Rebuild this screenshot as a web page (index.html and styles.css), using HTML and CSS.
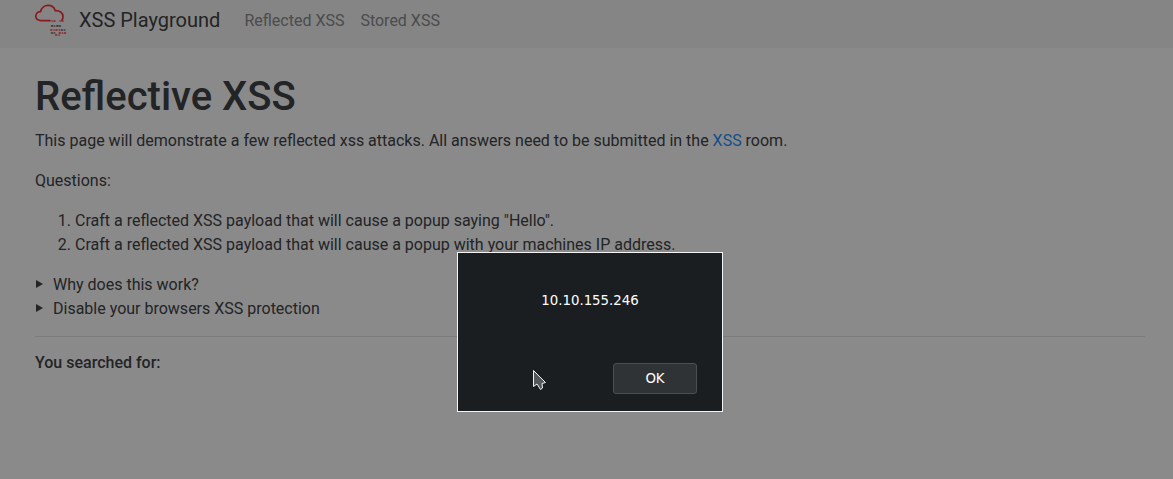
FILE: index.html
```html
<!DOCTYPE html>
<html lang="en">
<head>
<meta charset="utf-8">
<title>XSS Playground</title>
<link rel="stylesheet" href="styles.css">
</head>
<body>
<nav class="navbar">
  <a class="brand" href="#">
    <svg class="logo" width="32" height="36" viewBox="0 0 32 36" aria-hidden="true">
      <path d="M15 18.7H6C3 18.7 .8 16.8 .8 14.2C.8 11.5 3 9.7 5.5 9.7C6.3 6 9.5 3.4 13.2 3.4C16.7 3.4 19.3 5.5 20.2 8.6C24.5 8.2 28 10.8 28 14.6C28 16 27.6 17.2 27 18" fill="none" stroke="#ff3038" stroke-width="1.7" stroke-linecap="round"/>
      <text class="logo-bits logo-red" x="15.7" y="19.5">10</text>
      <text class="logo-bits logo-red" x="23.7" y="19.5">10</text>
      <text class="logo-bits" x="15.7" y="24.5">5150</text>
      <text class="logo-bits logo-red" x="15" y="28.5">0101</text>
      <text class="logo-bits" x="25.5" y="28.5">01</text>
      <text class="logo-bits" x="15.7" y="31.5">01</text>
      <text class="logo-bits logo-red" x="23.5" y="31.5">010</text>
      <text class="logo-bits logo-red" x="20" y="34">01</text>
    </svg>
    <span class="brand-name">XSS Playground</span>
  </a>
  <a class="nav-link" href="#">Reflected XSS</a>
  <a class="nav-link" href="#">Stored XSS</a>
</nav>
<main class="content">
  <h1>Reflective XSS</h1>
  <p>This page will demonstrate a few reflected xss attacks. All answers need to be submitted in the <a class="link" href="#">XSS</a> room.</p>
  <p>Questions:</p>
  <ol>
    <li>Craft a reflected XSS payload that will cause a popup saying "Hello".</li>
    <li>Craft a reflected XSS payload that will cause a popup with your machines IP address.</li>
  </ol>
  <details><summary>Why does this work?</summary></details>
  <details><summary>Disable your browsers XSS protection</summary></details>
  <hr>
  <p class="searched">You searched for:</p>
</main>
<div class="overlay"></div>
<div class="dialog" role="alertdialog">
  <div class="message">10.10.155.246</div>
  <button class="ok" type="button">OK</button>
  <svg class="cursor" width="15" height="23" viewBox="0 0 15 23" aria-hidden="true">
    <path d="M1.5 1.5V17.5L5 15L8.5 20.5L10.5 19L10 14.5L13.5 13.5Z" fill="#55585a" stroke="#f2f2f2" stroke-width="1"/>
  </svg>
</div>
</body>
</html>
```

FILE: styles.css
```css
* { box-sizing: border-box; }
html, body { height: 100%; }
body {
  margin: 0;
  background: #fff;
  color: #3f4347;
  font-family: Roboto, "Liberation Sans", sans-serif;
  font-size: 16px;
  line-height: 24px;
  overflow: hidden;
}
a { text-decoration: none; }
.navbar {
  display: flex;
  align-items: center;
  height: 48px;
  padding: 0 16px 8px 35px;
  background: #f6f6f6;
}
.brand {
  display: flex;
  align-items: center;
  margin-right: 16px;
  color: #3f4347;
}
.logo { flex: none; margin-right: 12px; }
.logo-bits { font-family: "Liberation Mono", monospace; font-size: 4.4px; font-weight: 700; fill: #555; }
.logo-red { fill: #ff3038; }
.brand-name { font-size: 20px; line-height: 30px; }
.nav-link { padding: 2px 8px 0; color: #8a8c8e; }
.content { padding: 25px 28px 0 35px; }
h1 { margin: 0 0 8px; font-size: 40px; line-height: 48px; font-weight: 500; }
p { margin: 0 0 16px; }
ol { margin: 0 0 16px; padding-left: 40px; }
.link { color: #2a90ff; }
details { line-height: 24px; }
summary { display: flex; align-items: center; cursor: pointer; list-style: none; }
summary::before {
  content: "";
  flex: none;
  width: 0;
  height: 0;
  margin: 0 10px 0 1px;
  position: relative;
  top: -1px;
  border-left: 7px solid #3f4347;
  border-top: 4.5px solid transparent;
  border-bottom: 4.5px solid transparent;
}
hr { margin: 15px 0 14px; border: 0; border-top: 1px solid rgba(0, 0, 0, .1); }
.searched { font-weight: 500; }
.overlay { position: absolute; inset: 0; background: rgba(0, 0, 0, .46); }
.dialog {
  position: absolute;
  left: 457px;
  top: 252px;
  width: 266px;
  height: 160px;
  background: #1b1e20;
  border: 1px solid #f4f4f4;
  color: #fff;
  font-family: "DejaVu Sans", sans-serif;
  font-size: 13.33px;
}
.message { margin-top: 38px; line-height: 20px; text-align: center; }
.ok {
  position: absolute;
  right: 25px;
  bottom: 17px;
  width: 84px;
  height: 31px;
  padding: 0;
  background: #2f3336;
  border: 1px solid #4b4f52;
  border-radius: 3px;
  color: #fff;
  font: 13.33px "DejaVu Sans", sans-serif;
}
.cursor { position: absolute; left: 74px; top: 116px; }
```
